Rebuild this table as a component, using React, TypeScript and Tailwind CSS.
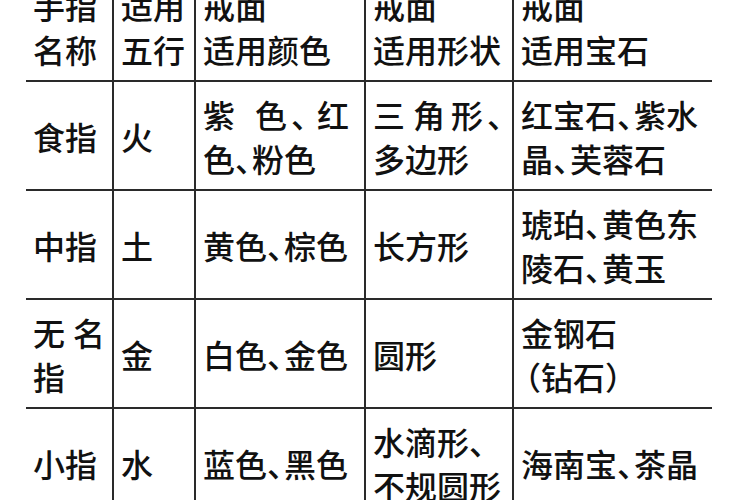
import React from "react";

const D = () => (
  <span className="inline-block w-[17px] overflow-hidden align-top whitespace-nowrap">、</span>
);

type CellProps = { children: React.ReactNode; last?: boolean };

const Cell = ({ children, last }: CellProps) => (
  <div
    className={
      "flex items-center pl-[7px] border-b-2 border-[#2a2a2a] h-[109px] " +
      (last ? "" : "border-r-2")
    }
  >
    <div className="leading-[44px] whitespace-nowrap">{children}</div>
  </div>
);

const L = ({ children }: { children: React.ReactNode }) => <div>{children}</div>;

export default function App() {
  return (
    <div
      className="w-[750px] h-[500px] overflow-hidden bg-white text-[#111111] text-[32px] font-medium"
      style={{ fontFamily: '"Noto Sans CJK SC", "Noto Sans", sans-serif' }}
    >
      <div className="-mt-[27px] ml-[26px] w-[686px] grid grid-cols-[88px_82px_170px_148px_198px]">
        {/* header */}
        <Cell>
          <L>手指</L>
          <L>名称</L>
        </Cell>
        <Cell>
          <L>适用</L>
          <L>五行</L>
        </Cell>
        <Cell>
          <L>戒面</L>
          <L>适用颜色</L>
        </Cell>
        <Cell>
          <L>戒面</L>
          <L>适用形状</L>
        </Cell>
        <Cell last>
          <L>戒面</L>
          <L>适用宝石</L>
        </Cell>

        {/* row 1 */}
        <Cell>
          <L>食指</L>
        </Cell>
        <Cell>
          <L>火</L>
        </Cell>
        <Cell>
          <L>
            <span className="mr-[20px]">紫</span>
            <span className="mr-[4px]">色</span>
            <span className="inline-block w-[26px] overflow-hidden align-top">、</span>
            <span>红</span>
          </L>
          <L>
            色<D />粉色
          </L>
        </Cell>
        <Cell>
          <L>
            <span className="mr-[8px]">三</span>
            <span className="mr-[6px]">角</span>
            <span className="mr-[4px]">形</span>
            <span>、</span>
          </L>
          <L>多边形</L>
        </Cell>
        <Cell last>
          <L>
            红宝石<D />紫水
          </L>
          <L>
            晶<D />芙蓉石
          </L>
        </Cell>

        {/* row 2 */}
        <Cell>
          <L>中指</L>
        </Cell>
        <Cell>
          <L>土</L>
        </Cell>
        <Cell>
          <L>
            黄色<D />棕色
          </L>
        </Cell>
        <Cell>
          <L>长方形</L>
        </Cell>
        <Cell last>
          <L>
            琥珀<D />黄色东
          </L>
          <L>
            陵石<D />黄玉
          </L>
        </Cell>

        {/* row 3 */}
        <Cell>
          <L>
            <span className="mr-[8px]">无</span>
            <span>名</span>
          </L>
          <L>指</L>
        </Cell>
        <Cell>
          <L>金</L>
        </Cell>
        <Cell>
          <L>
            白色<D />金色
          </L>
        </Cell>
        <Cell>
          <L>圆形</L>
        </Cell>
        <Cell last>
          <L>金钢石</L>
          <L>
            <span className="inline-block w-[20px] overflow-hidden align-top text-right">
              <span className="-ml-[12px]">（</span>
            </span>
            钻石）
          </L>
        </Cell>

        {/* row 4 */}
        <Cell>
          <L>小指</L>
        </Cell>
        <Cell>
          <L>水</L>
        </Cell>
        <Cell>
          <L>
            蓝色<D />黑色
          </L>
        </Cell>
        <Cell>
          <L>水滴形、</L>
          <L>不规圆形</L>
        </Cell>
        <Cell last>
          <L>
            海南宝<D />茶晶
          </L>
        </Cell>
      </div>
    </div>
  );
}
